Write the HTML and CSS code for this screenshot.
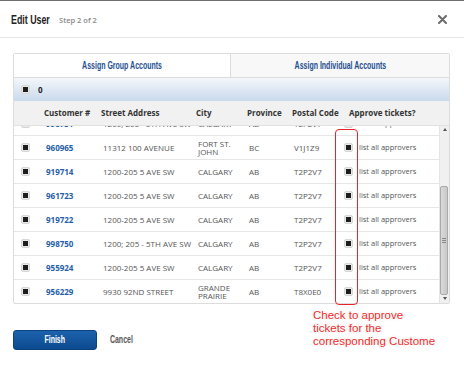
FILE: index.html
```html
<!DOCTYPE html>
<html lang="en">
<head>
  <meta charset="UTF-8">
  <title>Edit User</title>
  <link rel="stylesheet" href="styles.css">
</head>
<body>
  <div class="modal">
    <div class="modal-header">
      <h1 class="title">Edit User</h1>
      <span class="step">Step 2 of 2</span>
      <svg class="close" width="9" height="9" viewBox="0 0 9 9">
        <path d="M1 1 L8 8 M8 1 L1 8" stroke="#6b6b6b" stroke-width="2" stroke-linecap="round"/>
      </svg>
    </div>

    <div class="modal-body">
      <div class="panel">
        <div class="tabs">
          <div class="tab active"><span class="narrow">Assign Group Accounts</span></div>
          <div class="tab"><span class="narrow">Assign Individual Accounts</span></div>
        </div>

        <div class="toolbar">
          <span class="check"></span>
          <span class="count">0</span>
        </div>

        <table class="grid grid-head">
          <colgroup>
            <col style="width:30px"><col style="width:57px"><col style="width:95px"><col style="width:51px">
            <col style="width:45px"><col style="width:50px"><col>
          </colgroup>
          <tr>
            <th></th>
            <th>Customer #</th>
            <th>Street Address</th>
            <th>City</th>
            <th>Province</th>
            <th>Postal Code</th>
            <th class="approve-head">Approve tickets?</th>
          </tr>
        </table>

        <div class="grid-body">
          <div class="scroll-area">
            <table class="grid rows">
              <colgroup>
                <col style="width:30px"><col style="width:57px"><col style="width:95px"><col style="width:51px">
                <col style="width:45px"><col style="width:50px"><col>
              </colgroup>
              <tr>
                <td class="sel"><span class="check"></span></td>
                <td class="num">998751</td>
                <td>1200; 205 - 5TH AVE SW</td>
                <td>CALGARY</td>
                <td>AB</td>
                <td>T2P2V7</td>
                <td class="approve"><span class="check"></span>list all approvers</td>
              </tr>
              <tr>
                <td class="sel"><span class="check"></span></td>
                <td class="num">960965</td>
                <td>11312 100 AVENUE</td>
                <td>FORT ST. JOHN</td>
                <td>BC</td>
                <td>V1J1Z9</td>
                <td class="approve"><span class="check"></span>list all approvers</td>
              </tr>
              <tr>
                <td class="sel"><span class="check"></span></td>
                <td class="num">919714</td>
                <td>1200-205 5 AVE SW</td>
                <td>CALGARY</td>
                <td>AB</td>
                <td>T2P2V7</td>
                <td class="approve"><span class="check"></span>list all approvers</td>
              </tr>
              <tr>
                <td class="sel"><span class="check"></span></td>
                <td class="num">961723</td>
                <td>1200-205 5 AVE SW</td>
                <td>CALGARY</td>
                <td>AB</td>
                <td>T2P2V7</td>
                <td class="approve"><span class="check"></span>list all approvers</td>
              </tr>
              <tr>
                <td class="sel"><span class="check"></span></td>
                <td class="num">919722</td>
                <td>1200-205 5 AVE SW</td>
                <td>CALGARY</td>
                <td>AB</td>
                <td>T2P2V7</td>
                <td class="approve"><span class="check"></span>list all approvers</td>
              </tr>
              <tr>
                <td class="sel"><span class="check"></span></td>
                <td class="num">998750</td>
                <td>1200; 205 - 5TH AVE SW</td>
                <td>CALGARY</td>
                <td>AB</td>
                <td>T2P2V7</td>
                <td class="approve"><span class="check"></span>list all approvers</td>
              </tr>
              <tr>
                <td class="sel"><span class="check"></span></td>
                <td class="num">955924</td>
                <td>1200-205 5 AVE SW</td>
                <td>CALGARY</td>
                <td>AB</td>
                <td>T2P2V7</td>
                <td class="approve"><span class="check"></span>list all approvers</td>
              </tr>
              <tr>
                <td class="sel"><span class="check"></span></td>
                <td class="num">956229</td>
                <td>9930 92ND STREET</td>
                <td>GRANDE PRAIRIE</td>
                <td>AB</td>
                <td>T8X0E0</td>
                <td class="approve"><span class="check"></span>list all approvers</td>
              </tr>
            </table>
          </div>
          <div class="scrollbar">
            <span class="arrow up"></span>
            <div class="track">
              <div class="thumb"><span class="grip"></span></div>
            </div>
            <span class="arrow down"></span>
          </div>
        </div>
      </div>

      <div class="actions">
        <button class="btn-primary"><span class="narrow">Finish</span></button>
        <button class="btn-link"><span class="narrow">Cancel</span></button>
      </div>
    </div>

    <div class="callout-box"></div>
    <div class="callout-text">Check to approve<br>tickets for the<br>corresponding Custome</div>
  </div>
</body>
</html>
```

FILE: styles.css
```css
* {
  margin: 0;
  padding: 0;
  box-sizing: border-box;
}

body {
  font-family: "Open Sans", Arial, sans-serif;
  background-color: #fff;
  color: #555;
}

/* condensed headline look: no narrow face is installed, so squeeze the bold face */
.narrow {
  display: inline-block;
  font-family: "Liberation Sans", Arial, sans-serif;
  font-weight: bold;
  transform: scaleX(0.7);
}

.modal {
  position: relative;
  width: 464px;
  height: 389px;
  border-top: 1px solid #6e6e6e;
  background: #fff;
}

.modal-header {
  display: flex;
  align-items: center;
  height: 37px;
  padding: 0 11px;
  border-bottom: 1px solid #e6e6e6;
}

.title {
  font-family: "Liberation Sans", Arial, sans-serif;
  font-size: 13px;
  font-weight: bold;
  color: #222;
  transform: scaleX(0.68);
  transform-origin: left center;
}

.step {
  margin-left: -9px;
  margin-top: 2px;
  font-size: 7.5px;
  font-weight: 600;
  color: #8a8a8a;
}

.close {
  margin-left: auto;
  margin-right: 6px;
}

.modal-body {
  padding: 15px 14px 0 13px;
}

.panel {
  border: 1px solid #dcdcdc;
  border-radius: 2px;
}

.tabs {
  display: flex;
  height: 24px;
  border-bottom: 1px solid #dcdcdc;
}

.tab {
  display: flex;
  align-items: center;
  justify-content: center;
  font-size: 10px;
  color: #1d4f8f;
  background: #f8f8f8;
  flex: 1;
}

.tab.active {
  flex: 0 0 217px;
  background: #fff;
  border-right: 1px solid #dcdcdc;
}

.toolbar {
  display: flex;
  align-items: center;
  height: 23px;
  padding-left: 7px;
  background: linear-gradient(#f4f7fb, #c9d9ec);
}

.count {
  margin-left: 8px;
  font-size: 8px;
  font-weight: bold;
  color: #222;
}

.check {
  display: inline-flex;
  align-items: center;
  justify-content: center;
  width: 9px;
  height: 9px;
  border-radius: 2px;
  background: #e9e9e9;
  border: 1px solid #d6d6d6;
  vertical-align: middle;
}

.check::after {
  content: "";
  width: 5px;
  height: 5px;
  background: #1d1d1d;
}

.grid {
  width: 100%;
  border-collapse: collapse;
  table-layout: fixed;
}

.grid-head {
  background: #f1f1f1;
  border-bottom: 1px solid #e2e2e2;
}

.grid-head th {
  height: 24px;
  text-align: left;
  font-size: 8px;
  font-weight: bold;
  color: #333;
  white-space: nowrap;
}

.grid-head .approve-head {
  padding-left: 7px;
}

.grid-body {
  display: flex;
  height: 177px;
}

.scroll-area {
  flex: 1;
  overflow: hidden;
}

.rows {
  margin-top: -14px;
}

.rows td {
  height: 24px;
  padding: 0 2px;
  font-size: 8px;
  line-height: 7.5px;
  color: #555;
  border-bottom: 1px solid #e6e6e6;
  vertical-align: middle;
}

.rows tr:last-child td {
  border-bottom: none;
}

.rows .sel {
  padding-left: 7px;
}

.rows .num {
  font-weight: bold;
  color: #1f5ea8;
}

.rows .approve {
  font-size: 7.5px;
  white-space: nowrap;
}

.rows .approve .check {
  margin-right: 6px;
}

.scrollbar {
  display: flex;
  flex-direction: column;
  width: 10px;
  background: #f0f0f0;
  border-left: 1px solid #e4e4e4;
}

.arrow {
  display: flex;
  justify-content: center;
  align-items: center;
  height: 8px;
}

.arrow::after {
  content: "";
  border-left: 2px solid transparent;
  border-right: 2px solid transparent;
}

.arrow.up::after {
  border-bottom: 3px solid #555;
}

.arrow.down::after {
  border-top: 3px solid #555;
}

.track {
  flex: 1;
  display: flex;
  flex-direction: column;
  justify-content: flex-end;
}

.thumb {
  display: flex;
  align-items: center;
  justify-content: center;
  height: 109px;
  margin-right: 1px;
  border: 1px solid #a9a9a9;
  border-radius: 2px;
  background: linear-gradient(90deg, #dadada, #c8c8c8);
}

.grip {
  width: 4px;
  height: 5px;
  border-top: 1px solid #888;
  border-bottom: 1px solid #888;
  background: linear-gradient(#888, #888) center / 4px 1px no-repeat;
}

.actions {
  display: flex;
  align-items: center;
  margin-top: 26px;
}

.btn-primary {
  width: 84px;
  height: 20px;
  border: 1px solid #0d447f;
  border-radius: 3px;
  background: linear-gradient(#1d62ad, #0c4a8f);
  color: #fff;
  font-size: 10px;
  cursor: pointer;
}

.btn-link {
  margin-left: 8px;
  border: none;
  background: none;
  color: #555;
  font-size: 10px;
  cursor: pointer;
}

.callout-box {
  position: absolute;
  left: 335px;
  top: 128px;
  width: 23px;
  height: 176px;
  border: 1.5px solid #e8232a;
  border-radius: 4px;
}

.callout-text {
  position: absolute;
  left: 313px;
  top: 308px;
  font-family: "Liberation Sans", Arial, sans-serif;
  font-size: 11.5px;
  line-height: 12.8px;
  color: #f22a2a;
  text-shadow: 1px 0 0 #fff, -1px 0 0 #fff, 0 1px 0 #fff, 0 -1px 0 #fff, 0 0 2px #999;
}
```
